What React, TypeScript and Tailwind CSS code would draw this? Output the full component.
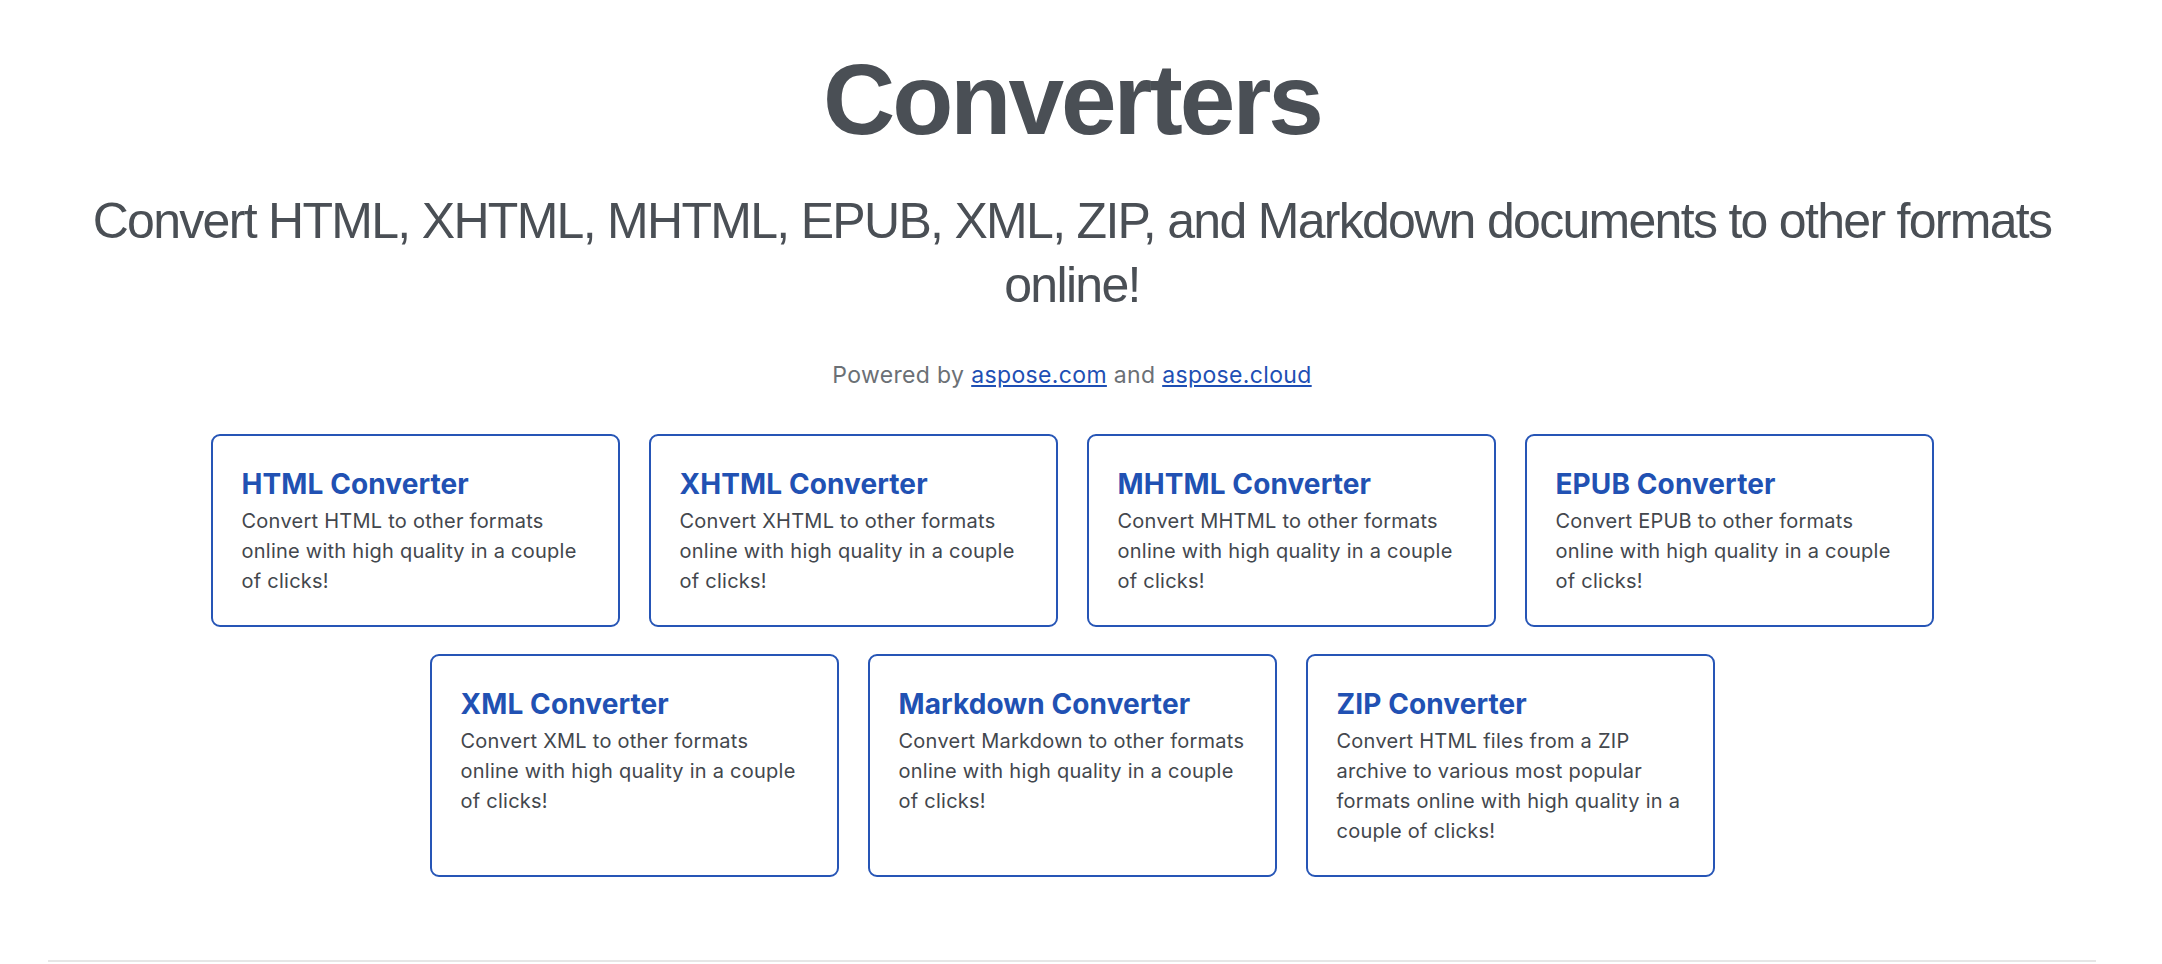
const converters = [
  {
    title: "HTML Converter",
    text: "Convert HTML to other formats online with high quality in a couple of clicks!",
  },
  {
    title: "XHTML Converter",
    text: "Convert XHTML to other formats online with high quality in a couple of clicks!",
  },
  {
    title: "MHTML Converter",
    text: "Convert MHTML to other formats online with high quality in a couple of clicks!",
  },
  {
    title: "EPUB Converter",
    text: "Convert EPUB to other formats online with high quality in a couple of clicks!",
  },
  {
    title: "XML Converter",
    text: "Convert XML to other formats online with high quality in a couple of clicks!",
  },
  {
    title: "Markdown Converter",
    text: "Convert Markdown to other formats online with high quality in a couple of clicks!",
  },
  {
    title: "ZIP Converter",
    text: "Convert HTML files from a ZIP archive to various most popular formats online with high quality in a couple of clicks!",
  },
];

const ConverterCard = ({ title, text }: { title: string; text: string }) => (
  <a
    href="#"
    className="block w-[409px] rounded-[9px] border-2 border-[#2655b6] bg-white px-[29px] pt-[29px] pb-[29px] no-underline"
  >
    <h3 className="mb-[3px] font-['Inter',sans-serif] text-[28px] font-bold leading-[38px] tracking-[0.1px] text-[#2151b3]">
      {title}
    </h3>
    <p className="font-['Inter',sans-serif] text-[20px] leading-[30px] tracking-[0.25px] text-[#43474d]">
      {text}
    </p>
  </a>
);

export default function App() {
  return (
    <div className="min-h-screen bg-white font-['Liberation_Sans',Arial,sans-serif]">
      <div className="ml-[48px] mr-[66px] border-b-2 border-[#e6e6e6] pb-[83px]">
        <h1 className="pt-[39px] text-center text-[100px] font-bold leading-[120px] tracking-[-3px] text-[#4a4f55]">
          Converters
        </h1>
        <h2 className="mx-auto mt-[30px] max-w-[2040px] text-center text-[50px] leading-[64px] tracking-[-1.7px] text-[#4a4f55]">
          Convert HTML, XHTML, MHTML, EPUB, XML, ZIP, and Markdown documents to other formats online!
        </h2>
        <p className="mt-[41px] text-center font-['Inter',sans-serif] text-[23px] leading-[34px] tracking-[0.35px] text-[#6b7075]">
          Powered by{" "}
          <a href="#" className="text-[#1e4fb4] underline">
            aspose.com
          </a>{" "}
          and{" "}
          <a href="#" className="text-[#1e4fb4] underline">
            aspose.cloud
          </a>
        </p>
        <div className="mx-auto mt-[42px] flex max-w-[1740px] flex-wrap justify-center gap-x-[29px] gap-y-[27px]">
          {converters.map((c) => (
            <ConverterCard key={c.title} title={c.title} text={c.text} />
          ))}
        </div>
      </div>
    </div>
  );
}
